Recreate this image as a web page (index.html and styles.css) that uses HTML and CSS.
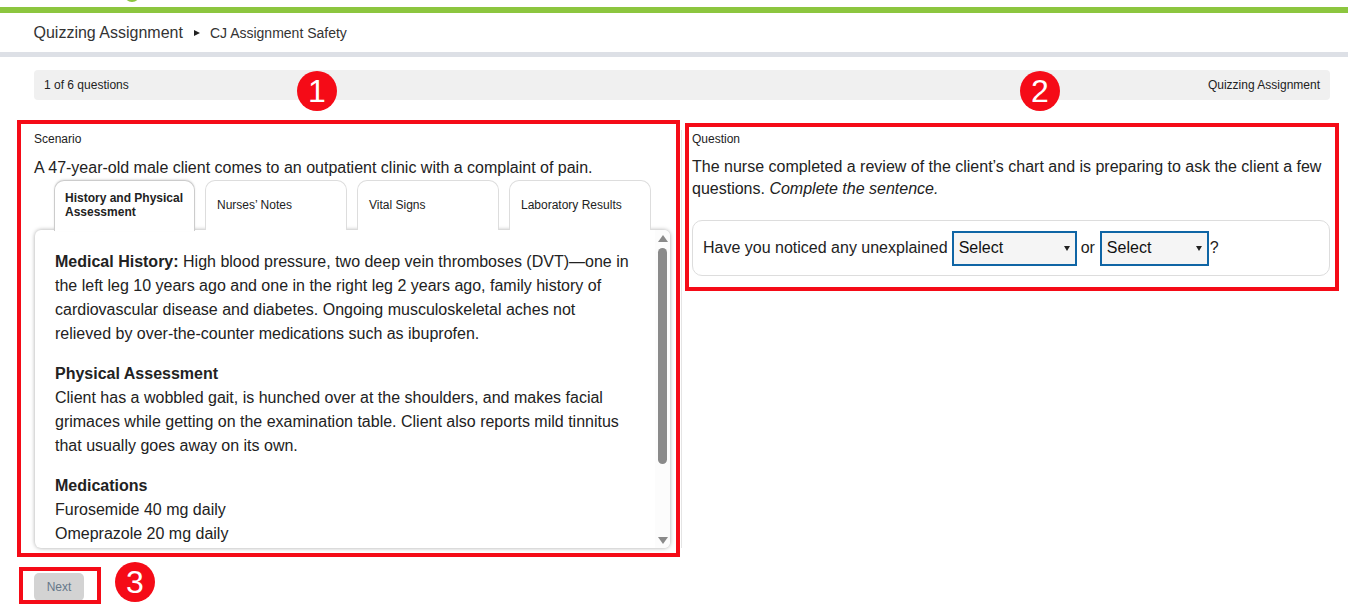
FILE: index.html
```html
<!DOCTYPE html>
<html lang="en">
  <head>
    <meta charset="UTF-8" />
    <title>Quizzing Assignment</title>
    <link rel="stylesheet" href="styles.css">
  </head>
  <body>
    <!-- Top bar -->
    <div class="top-strip"><span class="logo-dot"></span></div>
    <div class="green-bar"></div>
    <header class="crumbs">
      <span class="crumb-main">Quizzing Assignment</span>
      <svg class="crumb-arrow" width="6" height="6" viewBox="0 0 6 6"><path d="M0 0 L6 3 L0 6 Z" /></svg>
      <span class="crumb-sub">CJ Assignment Safety</span>
    </header>

    <main class="page">
      <div class="info-bar">
        <span>1 of 6 questions</span>
        <span>Quizzing Assignment</span>
      </div>

      <div class="columns">
        <!-- Scenario -->
        <section class="scenario">
          <div class="label">Scenario</div>
          <p class="lead">A 47-year-old male client comes to an outpatient clinic with a complaint of pain.</p>
          <div class="tabs">
            <div class="tab active">History and Physical Assessment</div>
            <div class="tab">Nurses’ Notes</div>
            <div class="tab">Vital Signs</div>
            <div class="tab">Laboratory Results</div>
          </div>
          <div class="panel">
            <div class="panel-text">
              <p><b>Medical History:</b> High blood pressure, two deep vein thromboses (DVT)—one in the left leg 10 years ago and one in the right leg 2 years ago, family history of cardiovascular disease and diabetes. Ongoing musculoskeletal aches not relieved by over-the-counter medications such as ibuprofen.</p>
              <p><b>Physical Assessment</b><br />Client has a wobbled gait, is hunched over at the shoulders, and makes facial grimaces while getting on the examination table. Client also reports mild tinnitus that usually goes away on its own.</p>
              <p><b>Medications</b><br />Furosemide 40 mg daily<br />Omeprazole 20 mg daily</p>
            </div>
            <div class="scrollbar">
              <svg width="10" height="7" viewBox="0 0 10 7"><path d="M5 0 L10 7 L0 7 Z" /></svg>
              <div class="scroll-track"><div class="scroll-thumb"></div></div>
              <svg width="10" height="7" viewBox="0 0 10 7"><path d="M0 0 L10 0 L5 7 Z" /></svg>
            </div>
          </div>
        </section>

        <!-- Question -->
        <section class="question">
          <div class="label">Question</div>
          <p class="lead">The nurse completed a review of the client’s chart and is preparing to ask the client a few questions. <i>Complete the sentence.</i></p>
          <div class="answer">
            <span>Have you noticed any unexplained</span>
            <span class="select wide">Select<svg width="6" height="6" viewBox="0 0 6 6"><path d="M0 1 L6 1 L3 6 Z" /></svg></span>
            <span>or</span>
            <span class="select narrow">Select<svg width="6" height="6" viewBox="0 0 6 6"><path d="M0 1 L6 1 L3 6 Z" /></svg></span>
            <span class="mark">?</span>
          </div>
        </section>
      </div>

      <button class="next-button">Next</button>
    </main>

    <!-- Annotations over the screenshot -->
    <div class="mark-box box-one"></div>
    <div class="mark-box box-two"></div>
    <div class="mark-box box-three"></div>
    <div class="badge badge-one">1</div>
    <div class="badge badge-two">2</div>
    <div class="badge badge-three">3</div>
  </body>
</html>
```

FILE: styles.css
```css
* {
  box-sizing: border-box;
}

body {
  margin: 0;
  height: 605px;
  overflow: hidden;
  position: relative;
  background: #fff;
  color: #222;
  font-family: "Liberation Sans", Arial, sans-serif;
  font-size: 16px;
}

.top-strip {
  height: 7px;
  position: relative;
  overflow: hidden;
}

.logo-dot {
  position: absolute;
  left: 124px;
  top: -14px;
  width: 16px;
  height: 16px;
  border-radius: 50%;
  background: #8cc63f;
}

.green-bar {
  height: 6px;
  background: #8cc63f;
}

.crumbs {
  height: 44px;
  padding: 1px 0 0 33.5px;
  display: flex;
  align-items: center;
  border-bottom: 5px solid #dde0e6;
  color: #333;
}

.crumb-main {
  font-size: 16px;
}

.crumb-arrow {
  margin: 0 10px 0 11px;
  fill: #222;
}

.crumb-sub {
  font-size: 14px;
}

.page {
  padding: 13px 18px 0 34px;
}

.info-bar {
  height: 30px;
  padding: 0 10px;
  display: flex;
  justify-content: space-between;
  align-items: center;
  background: #f0f0f0;
  border-radius: 4px;
  font-size: 12px;
}

.columns {
  display: flex;
  height: 418px;
  margin-top: 30px;
}

.scenario {
  width: 648px;
  flex-shrink: 0;
  border-right: 1px solid #e4e4e4;
}

.question {
  flex: 1;
  padding-left: 10px;
}

.label {
  font-size: 12px;
  line-height: 14px;
  height: 14px;
  margin-top: 2px;
}

.lead {
  margin: 10px 0 0;
  line-height: 22px;
}

.scenario .lead {
  margin-top: 11px;
}

.question .lead {
  width: 636px;
}

.tabs {
  display: flex;
  gap: 10px;
  margin-left: 20px;
  height: 50px;
  margin-top: 1px;
  position: relative;
  z-index: 1;
}

.tab {
  width: 142px;
  height: 50px;
  padding: 0 10px 2px 11px;
  display: flex;
  align-items: center;
  background: #fff;
  border: 1px solid #ddd;
  border-bottom: none;
  border-radius: 10px 10px 0 0;
  font-size: 12px;
  line-height: 14px;
}

.tab.active {
  width: 141px;
  height: 51px;
  padding: 0 4px 3px 10px;
  font-weight: bold;
  border-color: #ccc;
  box-shadow: 0 -1px 2px rgba(0, 0, 0, 0.1);
}

.panel {
  width: 635px;
  height: 318px;
  margin-left: 1px;
  display: flex;
  background: #fff;
  border-radius: 6px;
  box-shadow: 0 0 4px rgba(0, 0, 0, 0.35);
  overflow: hidden;
}

.panel-text {
  width: 620px;
  padding: 20px 24px 0 20px;
  line-height: 24px;
}

.panel-text p {
  margin: 0 0 16px;
}

.scrollbar {
  width: 15px;
  padding: 5px 0 4px;
  display: flex;
  flex-direction: column;
  align-items: center;
  background: #fcfcfc;
  fill: #8a8a8a;
}

.scroll-track {
  flex: 1;
  width: 9px;
  padding-top: 6px;
}

.scroll-thumb {
  height: 216px;
  background: #8a8a8a;
  border-radius: 5px;
}

.answer {
  height: 56px;
  margin-top: 20px;
  padding-left: 10px;
  display: flex;
  align-items: center;
  gap: 4px;
  width: 638px;
  border: 1px solid #ddd;
  border-radius: 10px;
}

.select {
  height: 35px;
  padding: 0 5px;
  display: flex;
  align-items: center;
  justify-content: space-between;
  background: #f5f5f5;
  border: 2px solid #0f65a5;
  color: #111;
}

.select svg {
  fill: #222;
}

.wide {
  width: 125px;
}

.narrow {
  width: 109px;
  margin-left: 1px;
}

.mark {
  margin-left: -3px;
}

.next-button {
  display: block;
  width: 50px;
  height: 28px;
  margin-top: 25px;
  padding: 0;
  background: #d3d3d3;
  border: none;
  border-radius: 5px;
  color: #66788a;
  font-family: inherit;
  font-size: 12px;
}

.mark-box {
  position: absolute;
  border: 4px solid #f50b17;
}

.box-one {
  left: 17px;
  top: 120px;
  width: 663px;
  height: 437px;
}

.box-two {
  left: 685px;
  top: 123px;
  width: 654px;
  height: 168px;
}

.box-three {
  left: 19px;
  top: 567px;
  width: 82px;
  height: 37px;
}

.badge {
  position: absolute;
  width: 40px;
  height: 40px;
  border-radius: 50%;
  background: #f50b17;
  color: #fff;
  font-size: 32px;
  line-height: 40px;
  text-align: center;
}

.badge-one {
  left: 297px;
  top: 71px;
}

.badge-two {
  left: 1020px;
  top: 71px;
}

.badge-three {
  left: 115px;
  top: 562px;
}
```
